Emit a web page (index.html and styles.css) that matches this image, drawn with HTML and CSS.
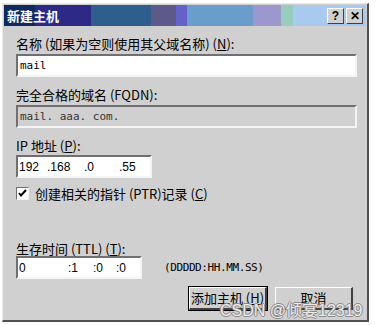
FILE: index.html
```html
<!DOCTYPE html>
<html lang="zh-CN">
<head>
    <meta charset="UTF-8">
    <title>新建主机</title>
    <link rel="stylesheet" href="styles.css">
</head>
<body>
    <div class="dialog">
        <div class="titlebar">
            <span class="title">新建主机</span>
            <div class="title-buttons">
                <span class="tbtn">?</span>
                <span class="tbtn">✕</span>
            </div>
        </div>

        <div class="content">
            <label class="lbl first">名称 (如果为空则使用其父域名称) (<u>N</u>):</label>
            <div class="field wide mono">mail</div>

            <label class="lbl">完全合格的域名 (FQDN):</label>
            <div class="field wide mono disabled">mail. aaa. com.</div>

            <label class="lbl">IP 地址 (<u>P</u>):</label>
            <div class="field ip">
                <span class="oct o1">192</span><span class="oct o2">.168</span><span class="oct o3">.0</span><span class="oct">.55</span>
            </div>

            <div class="check-row">
                <span class="checkbox">
                    <svg width="9" height="9" viewBox="0 0 9 9"><path d="M1 4 L3 6.5 L8 1" stroke="#000" stroke-width="2" fill="none"/></svg>
                </span>
                <span>创建相关的指针 (PTR)记录 (<u>C</u>)</span>
            </div>

            <label class="lbl ttl-label">生存时间 (TTL) (<u>T</u>):</label>
            <div class="ttl-row">
                <div class="field ttl">
                    <span class="t0">0</span><span class="t1">:1</span><span class="t2">:0</span><span class="t3">:0</span>
                </div>
                <span class="hint">(DDDDD:HH.MM.SS)</span>
            </div>

            <div class="buttons">
                <button class="btn default">添加主机 (<u>H</u>)</button>
                <button class="btn">取消</button>
            </div>
        </div>

        <div class="watermark">CSDN @倾宴12319</div>
    </div>
</body>
</html>
```

FILE: styles.css
```css
body {
    margin: 0;
    background: #ffffff;
    font-family: "Noto Sans CJK SC", "DejaVu Sans", sans-serif;
    font-size: 13px;
    color: #000;
}
.dialog {
    position: relative;
    width: 364px;
    height: 316px;
    margin: 3px 0 0 2px;
    background: #d0d0d0;
    border-top: 1px solid #e8e8e8;
    border-left: 1px solid #e8e8e8;
    border-right: 2px solid #505050;
    border-bottom: 2px solid #505050;
}
.titlebar {
    height: 21px;
    margin: 1px 1px 0 1px;
    display: flex;
    align-items: center;
    justify-content: space-between;
    background: linear-gradient(to right,
        #0e2a5e 0, #0e2a5e 31px,
        #2c2a86 31px, #2c2a86 87px,
        #2f5e8e 87px, #2f5e8e 147px,
        #5b5a8a 147px, #5b5a8a 172px,
        #6462c6 172px, #6462c6 183px,
        #6a9ccc 183px, #6a9ccc 249px,
        #9a98cc 249px, #9a98cc 277px,
        #98ccbc 277px, #98ccbc 289px,
        #a8caee 289px, #a8caee 100%);
}
.title {
    color: #fff;
    font-weight: bold;
    font-size: 13px;
    padding-left: 3px;
}
.title-buttons {
    display: flex;
    gap: 2px;
    padding-right: 3px;
}
.tbtn {
    width: 15px;
    height: 14px;
    background: #d0d0d0;
    border-top: 1px solid #fff;
    border-left: 1px solid #fff;
    border-right: 1px solid #404040;
    border-bottom: 1px solid #404040;
    font-family: "Liberation Sans", sans-serif;
    font-weight: bold;
    font-size: 12px;
    line-height: 14px;
    text-align: center;
}
.content {
    padding: 0 12px 0 13px;
    display: flex;
    flex-direction: column;
    align-items: flex-start;
}
.lbl {
    display: block;
    height: 16px;
    line-height: 16px;
    margin-top: 10px;
    margin-bottom: 2px;
    white-space: nowrap;
}
.lbl.first {
    margin-top: 10px;
}
.lbl.ttl-label {
    margin-top: 38px;
    margin-bottom: 0;
}
u {
    text-decoration: underline;
    text-underline-offset: 1px;
}
.field {
    box-sizing: border-box;
    height: 23px;
    background: #fff;
    border-top: 2px solid #707070;
    border-left: 2px solid #707070;
    border-right: 2px solid #f4f4f4;
    border-bottom: 2px solid #f4f4f4;
    display: flex;
    align-items: center;
    padding-left: 2px;
    white-space: nowrap;
}
.wide {
    width: 341px;
}
.mono {
    font-family: "DejaVu Sans Mono", monospace;
    font-size: 11px;
}
.disabled {
    background: #d0d0d0;
    color: #333;
}
.ip {
    width: 136px;
    margin-top: -1px;
    padding-left: 1px;
    font-family: "Liberation Sans", sans-serif;
    font-size: 12px;
}
.oct {
    display: inline-block;
}
.o1 { width: 28px; }
.o2 { width: 37px; }
.o3 { width: 35px; }
.check-row {
    display: flex;
    align-items: center;
    gap: 6px;
    margin-top: 6px;
    white-space: nowrap;
}
.checkbox {
    box-sizing: border-box;
    width: 13px;
    height: 13px;
    background: #fff;
    border-top: 1px solid #707070;
    border-left: 1px solid #707070;
    border-right: 1px solid #f4f4f4;
    border-bottom: 1px solid #f4f4f4;
    display: flex;
    align-items: center;
    justify-content: center;
}
.ttl-row {
    display: flex;
    align-items: center;
    gap: 22px;
    margin-top: -1px;
}
.ttl {
    width: 126px;
    padding-left: 1px;
    font-family: "Liberation Sans", sans-serif;
    font-size: 12px;
}
.ttl span {
    display: inline-block;
}
.ttl .t0 { width: 49px; }
.ttl .t1 { width: 25px; }
.ttl .t2 { width: 23px; }
.hint {
    font-family: "DejaVu Sans Mono", monospace;
    font-size: 11px;
    letter-spacing: -0.4px;
}
.buttons {
    display: flex;
    gap: 8px;
    align-self: flex-end;
    margin-top: 8px;
    margin-right: 2px;
}
.btn {
    box-sizing: border-box;
    width: 78px;
    height: 23px;
    background: #d0d0d0;
    border-top: 1px solid #fff;
    border-left: 1px solid #fff;
    border-right: 2px solid #404040;
    border-bottom: 2px solid #404040;
    font-family: "Noto Sans CJK SC", sans-serif;
    font-size: 13px;
    padding: 0;
    line-height: 18px;
}
.btn.default {
    outline: 1px solid #000;
}
.watermark {
    position: absolute;
    left: 217px;
    top: 293px;
    font-family: "Liberation Sans", "Noto Sans CJK SC", sans-serif;
    font-size: 16px;
    color: rgba(255, 255, 255, 0.85);
    text-shadow: 1px 0 0 #8a8a8a, -1px 0 0 #8a8a8a, 0 1px 0 #8a8a8a, 0 -1px 0 #8a8a8a;
    white-space: nowrap;
    pointer-events: none;
}
```
